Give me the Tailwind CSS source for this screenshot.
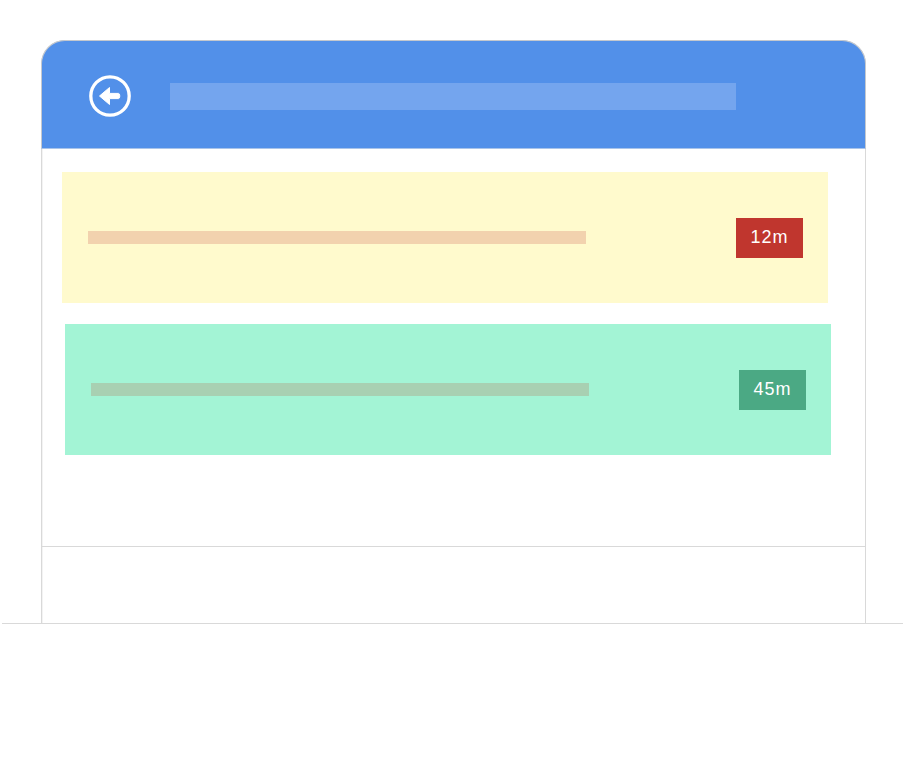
<!DOCTYPE html>
<html>
<head>
<meta charset="utf-8">
<script src="https://cdn.jsdelivr.net/npm/@tailwindcss/browser@4"></script>
</head>
<body class="bg-white font-['Liberation_Sans',sans-serif]">
<div class="w-[905px] h-[768px] overflow-hidden pt-[40px] pl-[2px]">
  <div class="w-[901px] h-[584px] border-b border-[#d9d9d9] pl-[39px]">
    <div class="w-[825px] h-[583px] flex flex-col rounded-t-[24px] border border-b-0 border-[#d9d9d9] border-t-[#c4c8ce] shadow-[inset_1px_0_0_#f3f3f3]">
      <header class="h-[109px] shrink-0 -mx-px -mt-px pl-[47px] pt-[3px] flex items-center gap-[39px] rounded-t-[24px] bg-[#5290e9] border border-[#c4c8ce] border-b-[#a9c4ea]">
        <svg class="w-[42px] h-[42px] shrink-0" viewBox="0 0 42 42" fill="none">
          <circle cx="21" cy="21" r="19.2" stroke="#fff" stroke-width="3.3"/>
          <path d="M10.5 21 L20.5 12.5 V18.4 H29.5 a1.3 2.6 0 0 1 0 5.2 H20.5 V29.5 Z" fill="#fff" stroke="#fff" stroke-width="1" stroke-linejoin="round"/>
        </svg>
        <div class="w-[566px] h-[27px] bg-[#74a5ee]"></div>
      </header>
      <main class="h-[398px] shrink-0 border-b border-[#d9d9d9] relative">
        <div class="ml-[20px] mt-[23px] w-[766px] h-[131px] bg-[#fffacd] flex items-center justify-between pl-[26px] pr-[25px]">
          <div class="w-[498px] h-[13px] bg-[#f2d2ae]"></div>
          <div class="w-[67px] h-[40px] bg-[#c0362e] text-white text-[18px] tracking-[1px] flex items-center justify-center">12m</div>
        </div>
        <div class="ml-[23px] mt-[21px] w-[766px] h-[131px] bg-[#a3f4d5] flex items-center justify-between pl-[26px] pr-[25px]">
          <div class="w-[498px] h-[13px] bg-[#a8d0b2]"></div>
          <div class="w-[67px] h-[40px] bg-[#4ba984] text-white text-[18px] tracking-[1px] flex items-center justify-center">45m</div>
        </div>
      </main>
      <footer class="flex-1"></footer>
    </div>
  </div>
</div>
</body>
</html>
